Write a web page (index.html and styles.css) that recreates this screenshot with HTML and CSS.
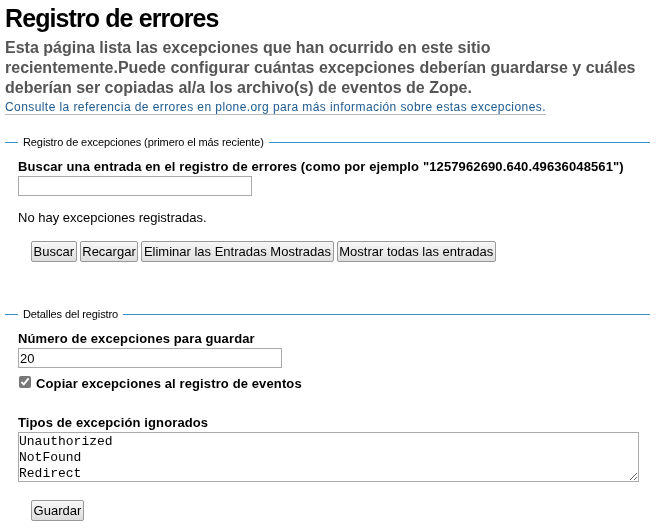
FILE: index.html
```html
<!DOCTYPE html>
<html lang="es">
<head>
<meta charset="utf-8">
<title>Registro de errores</title>
<link rel="stylesheet" href="styles.css">
</head>
<body>
<div class="page">
  <h1 class="title">Registro de errores</h1>
  <p class="desc">Esta página lista las excepciones que han ocurrido en este sitio recientemente.Puede configurar cuántas excepciones deberían guardarse y cuáles deberían ser copiadas al/a los archivo(s) de eventos de Zope.</p>
  <p class="help"><a class="link" href="#">Consulte la referencia de errores en plone.org para más información sobre estas excepciones.</a></p>

  <fieldset class="group group-first">
    <div class="group-head"><span class="legend">Registro de excepciones (primero el más reciente)</span></div>
    <div class="group-body">
      <div class="field">
        <label class="label" for="search">Buscar una entrada en el registro de errores (como por ejemplo "1257962690.640.49636048561")</label>
        <input class="text short" id="search" type="text">
      </div>
      <p class="empty">No hay excepciones registradas.</p>
      <div class="actions">
        <button class="btn" type="button">Buscar</button>
        <button class="btn" type="button">Recargar</button>
        <button class="btn" type="button">Eliminar las Entradas Mostradas</button>
        <button class="btn" type="button">Mostrar todas las entradas</button>
      </div>
    </div>
  </fieldset>

  <fieldset class="group group-second">
    <div class="group-head"><span class="legend">Detalles del registro</span></div>
    <div class="group-body">
      <div class="field">
        <label class="label" for="keep">Número de excepciones para guardar</label>
        <input class="text medium" id="keep" type="text" value="20">
      </div>
      <div class="field check-field">
        <input class="check" id="copy" type="checkbox" checked>
        <label class="label inline" for="copy">Copiar excepciones al registro de eventos</label>
      </div>
      <div class="field field-area">
        <label class="label" for="ignored">Tipos de excepción ignorados</label>
        <textarea class="area" id="ignored" rows="3">Unauthorized
NotFound
Redirect</textarea>
      </div>
      <div class="actions actions-save">
        <button class="btn" type="button">Guardar</button>
      </div>
    </div>
  </fieldset>
</div>
</body>
</html>
```

FILE: styles.css
```css
html, body {
  margin: 0;
  padding: 0;
  background: #fff;
}
body {
  font-family: "Liberation Sans", Arial, sans-serif;
  color: #000;
}
.page {
  padding: 4px 8px 0 5px;
}
.title {
  margin: 0;
  font-size: 25px;
  line-height: 28px;
  font-weight: bold;
  color: #000;
  letter-spacing: -0.9px;
}
.desc {
  margin: 6px 0 0 0;
  font-size: 16px;
  line-height: 20px;
  font-weight: bold;
  color: #555;
}
.help {
  margin: 1px 0 0 0;
  font-size: 12px;
  line-height: 16px;
}
.link {
  color: #205c90;
  text-decoration: none;
  border-bottom: 1px solid #bbb;
  letter-spacing: 0.42px;
}
.group {
  margin: 0;
  padding: 0;
  border: none;
  min-width: 0;
}
.group-first {
  margin-top: 21px;
}
.group-second {
  margin-top: 46px;
}
.group-head {
  display: flex;
  align-items: center;
  gap: 5px;
  height: 13px;
}
.group-head::before,
.group-head::after {
  content: "";
  height: 1px;
  background: #3a8fc6;
}
.group-head::before {
  width: 13px;
}
.group-head::after {
  flex: 1;
}
.legend {
  font-size: 11px;
  line-height: 13px;
  color: #000;
  letter-spacing: -0.1px;
  white-space: nowrap;
}
.group-body {
  padding-left: 13px;
}
.field {
  margin-top: 10px;
}
.label {
  display: block;
  font-size: 13px;
  line-height: 16px;
  font-weight: bold;
  letter-spacing: 0.12px;
}
.label.inline {
  display: inline;
}
.text {
  display: block;
  box-sizing: border-box;
  height: 20px;
  margin: 1px 0 0 0;
  padding: 1px 1px;
  border: 1px solid #aaa;
  font-family: "Liberation Sans", Arial, sans-serif;
  font-size: 13px;
  color: #000;
}
.short { width: 234px; }
.medium { width: 264px; }
.empty {
  margin: 14px 0 0 0;
  font-size: 13px;
  line-height: 16px;
}
.actions {
  margin-top: 15px;
  padding-left: 13px;
  display: flex;
  gap: 3px;
}
.btn {
  box-sizing: border-box;
  height: 21px;
  padding: 0 1.6px;
  border: 1px solid #999;
  border-radius: 2px;
  background: linear-gradient(#f7f7f7, #dedede);
  font-family: "Liberation Sans", Arial, sans-serif;
  font-size: 13px;
  color: #000;
}
.check-field {
  margin-top: 8px;
  display: flex;
  align-items: flex-start;
  gap: 5px;
}
.check {
  margin: 0 0 0 1px;
  width: 12px;
  height: 12px;
  accent-color: #777;
}
.field-area {
  margin-top: 23px;
}
.area {
  display: block;
  box-sizing: border-box;
  width: 621px;
  height: 50px;
  margin: 1px 0 0 0;
  padding: 1px 0;
  border: 1px solid #aaa;
  font-family: "Liberation Mono", "Courier New", monospace;
  font-size: 13px;
  line-height: 16px;
  resize: both;
}
.actions-save {
  margin-top: 18px;
}
```
